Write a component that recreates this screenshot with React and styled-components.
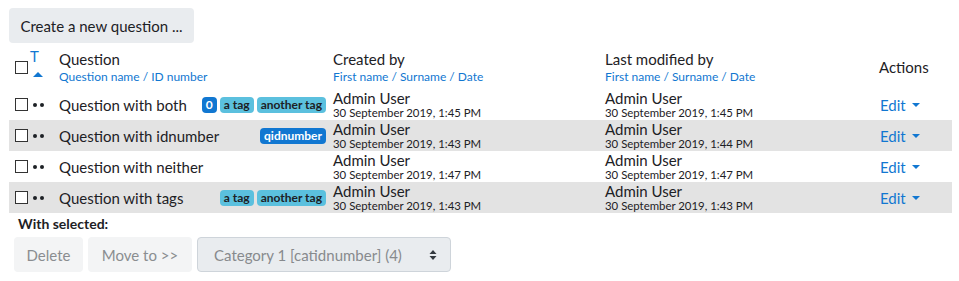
import React from "react";
import styled, { createGlobalStyle } from "styled-components";

const GlobalStyle = createGlobalStyle`
  body {
    margin: 0;
    background: #fff;
    font-family: Lato, "Liberation Sans", sans-serif;
    color: #1d2125;
  }
`;

const questions = [
  { name: "Question with both", badges: [{ text: "0", kind: "id" }, { text: "a tag" }, { text: "another tag" }], created: "1:45 PM", modified: "1:45 PM" },
  { name: "Question with idnumber", badges: [{ text: "qidnumber", kind: "id" }], created: "1:43 PM", modified: "1:44 PM" },
  { name: "Question with neither", badges: [], created: "1:47 PM", modified: "1:47 PM" },
  { name: "Question with tags", badges: [{ text: "a tag" }, { text: "another tag" }], created: "1:43 PM", modified: "1:43 PM" },
];

const App = () => {
  return (
    <Page>
      <GlobalStyle />
      <CreateButton>Create a new question ...</CreateButton>
      <Table>
        <colgroup>
          <col style={{ width: 44 }} />
          <col style={{ width: 274 }} />
          <col style={{ width: 272 }} />
          <col style={{ width: 274 }} />
          <col style={{ width: 79 }} />
        </colgroup>
        <thead>
          <tr>
            <HeadCell>
              <HeadCheck>
                <Checkbox />
                <SortMark>
                  <span>T</span>
                  <UpCaret />
                </SortMark>
              </HeadCheck>
            </HeadCell>
            <HeadCell>
              <HeadTitle>Question</HeadTitle>
              <SubLinks>Question name / ID number</SubLinks>
            </HeadCell>
            <HeadCell>
              <HeadTitle>Created by</HeadTitle>
              <SubLinks>First name / Surname / Date</SubLinks>
            </HeadCell>
            <HeadCell>
              <HeadTitle>Last modified by</HeadTitle>
              <SubLinks>First name / Surname / Date</SubLinks>
            </HeadCell>
            <HeadCell $middle>
              <HeadTitle>Actions</HeadTitle>
            </HeadCell>
          </tr>
        </thead>
        <tbody>
          {questions.map((q, i) => (
            <Row key={q.name} $striped={i % 2 === 1}>
              <Cell>
                <RowCheck>
                  <Checkbox />
                  <Dots>
                    <i />
                    <i />
                  </Dots>
                </RowCheck>
              </Cell>
              <NameCell>
                <NameWrap>
                  <span>{q.name}</span>
                  <Badges>
                    {q.badges.map((b) => (
                      <Badge key={b.text} $kind={b.kind}>{b.text}</Badge>
                    ))}
                  </Badges>
                </NameWrap>
              </NameCell>
              <Cell>
                <UserName>Admin User</UserName>
                <DateText>30 September 2019, {q.created}</DateText>
              </Cell>
              <Cell>
                <UserName>Admin User</UserName>
                <DateText>30 September 2019, {q.modified}</DateText>
              </Cell>
              <Cell>
                <EditLink>
                  Edit <DownCaret />
                </EditLink>
              </Cell>
            </Row>
          ))}
        </tbody>
      </Table>
      <Selected>With selected:</Selected>
      <Actions>
        <GhostButton $w={69}>Delete</GhostButton>
        <GhostButton $w={104}>Move to &gt;&gt;</GhostButton>
        <Select>
          <span>Category 1 [catidnumber] (4)</span>
          <svg width="8" height="12" viewBox="0 0 8 12">
            <path d="M4 1 L7.5 5 H0.5 Z M4 11 L7.5 7 H0.5 Z" fill="#343a40" />
          </svg>
        </Select>
      </Actions>
    </Page>
  );
};

const Page = styled.div`
  padding: 8px 7px 0 9px;
`;
const CreateButton = styled.div`
  display: flex;
  align-items: center;
  justify-content: center;
  width: 185px;
  height: 35px;
  box-sizing: border-box;
  white-space: nowrap;
  background: #e9ecef;
  border-radius: 4px;
  font-size: 15px;
  color: #1d2125;
`;
const Table = styled.table`
  width: 943px;
  border-collapse: collapse;
  table-layout: fixed;
  margin-top: 1px;
`;
const HeadCell = styled.th`
  text-align: left;
  font-weight: normal;
  padding: 6px 0 4px 6px;
  vertical-align: ${(p) => (p.$middle ? "middle" : "top")};
  height: 35px;
`;
const HeadCheck = styled.div`
  display: flex;
  align-items: flex-start;
  padding-top: 11px;
`;
const SortMark = styled.div`
  display: flex;
  flex-direction: column;
  align-items: center;
  margin-left: 1px;
  margin-top: -12px;
  color: #1177d1;
  font-size: 15px;
  line-height: 14px;
  span {
    margin-left: -3px;
  }
`;
const UpCaret = styled.div`
  width: 0;
  height: 0;
  margin: 9px 0 0 4px;
  border-left: 5px solid transparent;
  border-right: 5px solid transparent;
  border-bottom: 5px solid #1177d1;
`;
const DownCaret = styled.div`
  width: 0;
  height: 0;
  border-left: 4px solid transparent;
  border-right: 4px solid transparent;
  border-top: 4px solid #1177d1;
`;
const HeadTitle = styled.div`
  font-size: 15px;
  line-height: 19px;
`;
const SubLinks = styled.div`
  font-size: 12px;
  line-height: 16px;
  color: #1177d1;
`;
const Row = styled.tr`
  background: ${(p) => (p.$striped ? "#e3e3e3" : "transparent")};
  height: 31px;
`;
const Cell = styled.td`
  padding: 0 0 0 6px;
  vertical-align: middle;
`;
const NameCell = styled(Cell)`
  padding-right: 1px;
`;
const RowCheck = styled.div`
  display: flex;
  align-items: center;
`;
const Checkbox = styled.div`
  width: 13px;
  height: 13px;
  box-sizing: border-box;
  border: 1px solid #333;
  background: #fff;
  flex: none;
`;
const Dots = styled.div`
  display: flex;
  gap: 3px;
  margin-left: 5px;
  margin-top: 1px;
  i {
    width: 4px;
    height: 4px;
    border-radius: 50%;
    background: #1d2125;
  }
`;
const NameWrap = styled.div`
  display: flex;
  align-items: center;
  justify-content: space-between;
  font-size: 15px;
`;
const Badges = styled.div`
  display: flex;
  gap: 3px;
`;
const Badge = styled.span`
  display: inline-block;
  height: 16px;
  line-height: 16px;
  padding: 0 4px;
  border-radius: 4px;
  font-size: 12px;
  font-weight: bold;
  background: ${(p) => (p.$kind === "id" ? "#1177d1" : "#5bc0de")};
  color: ${(p) => (p.$kind === "id" ? "#fff" : "#1d2125")};
`;
const UserName = styled.div`
  font-size: 15px;
  line-height: 16px;
`;
const DateText = styled.div`
  font-size: 11.4px;
  line-height: 14px;
`;
const EditLink = styled.div`
  display: flex;
  align-items: center;
  gap: 6px;
  font-size: 15px;
  color: #1177d1;
  padding-left: 1px;
`;
const Selected = styled.div`
  font-weight: bold;
  font-size: 14px;
  line-height: 18px;
  margin: 2px 0 0 9px;
`;
const Actions = styled.div`
  display: flex;
  gap: 5px;
  margin: 4px 0 0 5px;
`;
const GhostButton = styled.div`
  width: ${(p) => p.$w}px;
  height: 35px;
  box-sizing: border-box;
  display: flex;
  align-items: center;
  justify-content: center;
  background: #f3f4f5;
  border-radius: 4px;
  font-size: 15px;
  color: #8a8d90;
`;
const Select = styled.div`
  width: 254px;
  height: 35px;
  box-sizing: border-box;
  display: flex;
  align-items: center;
  justify-content: space-between;
  padding: 0 13px 0 16px;
  background: #e9ecef;
  border: 1px solid #ced4da;
  border-radius: 4px;
  font-size: 15px;
  color: #878a8d;
`;

export default App;
